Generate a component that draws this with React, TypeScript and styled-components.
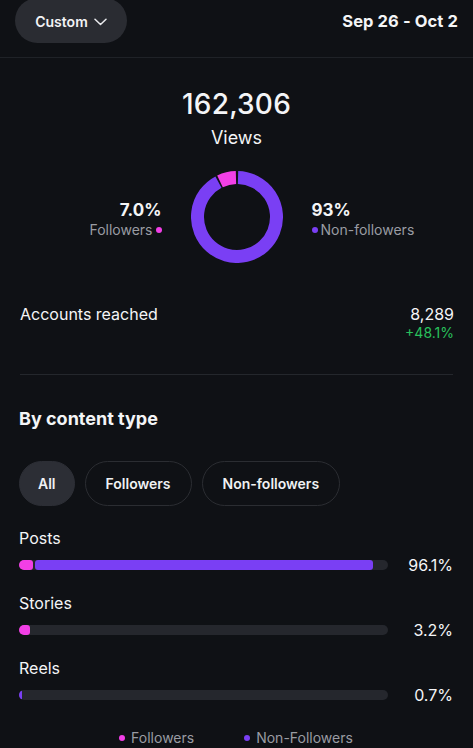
import React from "react";
import styled, { createGlobalStyle } from "styled-components";

const Global = createGlobalStyle`
  html, body { margin: 0; padding: 0; background: #0f1115; }
  body { font-family: Inter, "Noto Sans", sans-serif; color: #f4f5f7; -webkit-font-smoothing: antialiased; }
  * { box-sizing: border-box; }
`;

const PINK = "#f23fe6";
const PURPLE = "#7a3ff4";
const TRACK = "#25272d";

const Page = styled.div`
  width: 473px;
  height: 748px;
  overflow: hidden;
  background: #0f1115;
`;

const Header = styled.header`
  height: 58px;
  display: flex;
  align-items: flex-start;
  justify-content: space-between;
  padding: 0 15px;
  border-bottom: 1px solid #1f2227;
`;

const Pill = styled.button`
  margin-top: -2px;
  height: 45px;
  width: 112px;
  border: none;
  border-radius: 23px;
  background: #2a2c32;
  color: #f2f3f5;
  font-family: inherit;
  font-size: 14px;
  font-weight: 600;
  display: flex;
  align-items: center;
  justify-content: center;
  gap: 6px;
  padding: 2px 0 0;
`;

const DateText = styled.div`
  font-size: 16.5px;
  font-weight: 700;
  margin-top: 11px;
  letter-spacing: 0.1px;
`;

const Hero = styled.section`
  display: flex;
  flex-direction: column;
  align-items: center;
  padding-top: 29px;
`;

const BigNum = styled.div`
  font-size: 28px;
  font-weight: 500;
  line-height: 34px;
  letter-spacing: 0.2px;
`;

const ViewsLabel = styled.div`
  font-size: 18px;
  line-height: 24px;
  margin-top: 5px;
`;

const StatsRow = styled.div`
  margin-top: 21px;
  width: 100%;
  display: grid;
  grid-template-columns: 1fr auto 1fr;
  column-gap: 29px;
  align-items: center;
`;

const Side = styled.div<{ $align: "left" | "right" }>`
  justify-self: ${(p) => (p.$align === "right" ? "end" : "start")};
  text-align: ${(p) => p.$align};
  display: flex;
  flex-direction: column;
  align-items: ${(p) => (p.$align === "right" ? "flex-end" : "flex-start")};
  margin-top: 4px;
`;

const Pct = styled.div`
  font-size: 17px;
  font-weight: 700;
  line-height: 22px;
`;

const SideLabel = styled.div`
  font-size: 14px;
  color: #9a9ca3;
  line-height: 18px;
  display: flex;
  align-items: center;
  gap: 3px;
`;

const Dot = styled.span<{ $c: string }>`
  width: 6px;
  height: 6px;
  border-radius: 50%;
  background: ${(p) => p.$c};
  display: inline-block;
`;

const Reached = styled.section`
  margin-top: 41px;
  margin-inline: 20px;
  padding-bottom: 32px;
  border-bottom: 1px solid #24272c;
  display: flex;
  justify-content: space-between;
  align-items: flex-start;
`;

const ReachedLabel = styled.div`
  font-size: 16px;
  line-height: 20px;
`;

const ReachedValue = styled.div`
  display: flex;
  flex-direction: column;
  align-items: flex-end;
  font-size: 16px;
  line-height: 20px;
  margin-right: -1px;
`;

const Growth = styled.div`
  color: #29c05c;
  font-size: 14px;
  line-height: 18px;
`;

const Section = styled.section`
  padding: 33px 20px 0 19px;
`;

const Title = styled.h2`
  margin: 0;
  font-size: 18px;
  font-weight: 700;
  line-height: 22px;
`;

const Chips = styled.div`
  display: flex;
  gap: 10px;
  margin-top: 31px;
`;

const Chip = styled.button<{ $active?: boolean }>`
  height: 45px;
  padding: 0 ${(p) => (p.$active ? "18px" : "20px")};
  border-radius: 23px;
  border: 1px solid ${(p) => (p.$active ? "#2c2e35" : "#2b2d32")};
  background: ${(p) => (p.$active ? "#2c2e35" : "transparent")};
  color: #f0f1f3;
  font-family: inherit;
  font-size: 14px;
  font-weight: 600;
`;

const Rows = styled.div`
  margin-top: 22px;
  display: flex;
  flex-direction: column;
  gap: 18px;
`;

const Row = styled.div``;

const RowLabel = styled.div`
  font-size: 16px;
  line-height: 20px;
`;

const BarLine = styled.div`
  display: flex;
  align-items: center;
  justify-content: space-between;
  margin-top: 7px;
`;

const Track = styled.div`
  width: 369px;
  height: 10px;
  border-radius: 5px;
  background: ${TRACK};
  display: flex;
  gap: 2px;
  overflow: hidden;
`;

const Seg = styled.div<{ $c: string }>`
  height: 100%;
  background: ${(p) => p.$c};
  border-radius: 3px;
`;

const RowPct = styled.div`
  font-size: 16px;
  line-height: 20px;
`;

const Legend = styled.div`
  margin-top: 24px;
  display: flex;
  justify-content: center;
  gap: 50px;
  font-size: 14px;
  color: #9a9ca3;
`;

const LegendItem = styled.div`
  display: flex;
  align-items: center;
  gap: 6px;
`;

function arc(cx: number, cy: number, r: number, a0: number, a1: number) {
  const rad = (a: number) => ((a - 90) * Math.PI) / 180;
  const x0 = cx + r * Math.cos(rad(a0));
  const y0 = cy + r * Math.sin(rad(a0));
  const x1 = cx + r * Math.cos(rad(a1));
  const y1 = cy + r * Math.sin(rad(a1));
  const large = a1 - a0 > 180 ? 1 : 0;
  return `M ${x0} ${y0} A ${r} ${r} 0 ${large} 1 ${x1} ${y1}`;
}

const Donut = () => (
  <svg width="92" height="92" viewBox="0 0 92 92">
    <path d={arc(46, 46, 39.5, 1.5, 332)} stroke={PURPLE} strokeWidth="13" fill="none" />
    <path d={arc(46, 46, 39.5, 334.5, 358.5)} stroke={PINK} strokeWidth="13" fill="none" />
  </svg>
);

const Chevron = () => (
  <svg width="13" height="8" viewBox="0 0 13 8" fill="none">
    <path d="M1 1.2 L6.5 6.5 L12 1.2" stroke="#e9eaed" strokeWidth="1.5" strokeLinecap="round" strokeLinejoin="round" />
  </svg>
);

const rows = [
  { label: "Posts", f: 14, n: 338, pct: "96.1%" },
  { label: "Stories", f: 11, n: 0, pct: "3.2%" },
  { label: "Reels", f: 0, n: 3, pct: "0.7%" },
];

export default function App() {
  return (
    <Page>
      <Global />
      <Header>
        <Pill>
          Custom <Chevron />
        </Pill>
        <DateText>Sep 26 - Oct 2</DateText>
      </Header>
      <Hero>
        <BigNum>162,306</BigNum>
        <ViewsLabel>Views</ViewsLabel>
        <StatsRow>
          <Side $align="right">
            <Pct>7.0%</Pct>
            <SideLabel>
              Followers <Dot $c={PINK} />
            </SideLabel>
          </Side>
          <Donut />
          <Side $align="left">
            <Pct>93%</Pct>
            <SideLabel>
              <Dot $c={PURPLE} />
              Non-followers
            </SideLabel>
          </Side>
        </StatsRow>
      </Hero>
      <Reached>
        <ReachedLabel>Accounts reached</ReachedLabel>
        <ReachedValue>
          8,289
          <Growth>+48.1%</Growth>
        </ReachedValue>
      </Reached>
      <Section>
        <Title>By content type</Title>
        <Chips>
          <Chip $active>All</Chip>
          <Chip>Followers</Chip>
          <Chip>Non-followers</Chip>
        </Chips>
        <Rows>
          {rows.map((r) => (
            <Row key={r.label}>
              <RowLabel>{r.label}</RowLabel>
              <BarLine>
                <Track>
                  {r.f > 0 && <Seg $c={PINK} style={{ width: r.f }} />}
                  {r.n > 0 && <Seg $c={PURPLE} style={{ width: r.n }} />}
                </Track>
                <RowPct>{r.pct}</RowPct>
              </BarLine>
            </Row>
          ))}
        </Rows>
        <Legend>
          <LegendItem>
            <Dot $c={PINK} />
            Followers
          </LegendItem>
          <LegendItem>
            <Dot $c={PURPLE} />
            Non-Followers
          </LegendItem>
        </Legend>
      </Section>
    </Page>
  );
}
